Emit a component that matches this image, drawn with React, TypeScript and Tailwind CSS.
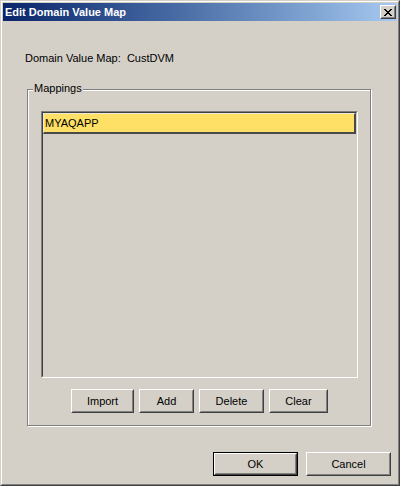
// EditDomainValueMapDialog — classic Windows-style dialog
import type { ReactNode } from 'react';

const font = "font-['Liberation_Sans',Arial,sans-serif]";

function RaisedButton({ children, width, isDefault }: { children: ReactNode; width: string; isDefault?: boolean }) {
  const body = (
    <div className="h-full border border-t-white border-l-white border-b-[#404040] border-r-[#404040]">
      <div className="h-full flex items-center justify-center border border-t-[#d4d0c8] border-l-[#d4d0c8] border-b-[#808080] border-r-[#808080]">
        {children}
      </div>
    </div>
  );
  return (
    <button className={`${width} h-[24px] bg-[#d4d0c8] text-[11px] leading-[13px] text-black ${isDefault ? 'border border-black' : ''}`}>
      {body}
    </button>
  );
}

export default function App() {
  return (
    <div className={`w-[400px] h-[486px] bg-[#d4d0c8] text-[11px] leading-[13px] text-black ${font}`}>
      {/* ── Window frame ─────────────────────────────── */}
      <div className="h-full border border-t-[#d4d0c8] border-l-[#d4d0c8] border-b-[#404040] border-r-[#404040]">
        <div className="h-full flex flex-col p-px border border-t-white border-l-white border-b-[#808080] border-r-[#808080]">
          {/* Title bar */}
          <div className="h-[18px] shrink-0 flex items-center justify-between pl-[2px] pr-[1px] bg-gradient-to-r from-[#0a246a] to-[#a6caf0]">
            <span className="text-white font-bold text-[11px] leading-[13px]">Edit Domain Value Map</span>
            <button className="w-[16px] h-[14px] bg-[#d4d0c8] border border-t-white border-l-white border-b-[#404040] border-r-[#404040]">
              <div className="h-full flex items-center justify-center border border-t-[#d4d0c8] border-l-[#d4d0c8] border-b-[#808080] border-r-[#808080]">
                <svg width="8" height="7" viewBox="0 0 8 7" shapeRendering="crispEdges">
                  <path d="M0 0h2v1h-2zM6 0h2v1h-2zM1 1h2v1h-2zM5 1h2v1h-2zM2 2h4v1h-4zM3 3h2v1h-2zM2 4h4v1h-4zM1 5h2v1h-2zM5 5h2v1h-2zM0 6h2v1h-2zM6 6h2v1h-2z" fill="#000" />
                </svg>
              </div>
            </button>
          </div>

          {/* Header line */}
          <p className="mt-[31px] ml-[22px] h-[13px] whitespace-pre">Domain Value Map:  CustDVM</p>

          {/* Mappings group */}
          <div className="relative mt-[24px] ml-[24px] w-[344px] h-[337px] border border-[#808080] shadow-[1px_1px_0_#fff,inset_1px_1px_0_#fff] pt-[21px] pl-[13px]">
            <span className="absolute left-[5px] top-[-8px] px-px bg-[#d4d0c8]">Mappings</span>

            <div className="w-[317px] h-[267px] border border-t-[#808080] border-l-[#808080] border-b-white border-r-white">
              <div className="h-full border border-t-[#404040] border-l-[#404040] border-b-[#d4d0c8] border-r-[#d4d0c8]">
                <div className="h-[21px] flex items-center pl-px bg-[#ffe066] border-t border-l border-t-[#ece9d8] border-l-[#ece9d8] border-b-2 border-r-2 border-b-[#4a4a4a] border-r-[#4a4a4a]">
                  MYAQAPP
                </div>
              </div>
            </div>

            <div className="mt-[11px] w-[317px] flex justify-center gap-[5px]">
              <RaisedButton width="w-[63px]">Import</RaisedButton>
              <RaisedButton width="w-[55px]">Add</RaisedButton>
              <RaisedButton width="w-[65px]">Delete</RaisedButton>
              <RaisedButton width="w-[59px]">Clear</RaisedButton>
            </div>
          </div>

          {/* Dialog buttons */}
          <div className="mt-[26px] flex justify-end gap-[8px] pr-[6px]">
            <RaisedButton width="w-[85px]" isDefault>OK</RaisedButton>
            <RaisedButton width="w-[85px]">Cancel</RaisedButton>
          </div>
        </div>
      </div>
    </div>
  );
}
